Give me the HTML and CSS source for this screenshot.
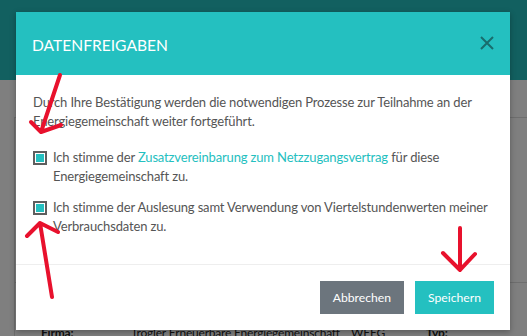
FILE: index.html
```html
<!DOCTYPE html>
<html lang="de">
<head>
    <meta charset="UTF-8">
    <meta name="viewport" content="width=device-width, initial-scale=1.0">
    <title>Datenfreigaben</title>
    <link rel="stylesheet" href="styles.css">
</head>
<body>
    <header class="navbar"></header>

    <main class="page">
        <div class="card">
            <div class="card-row"></div>
            <div class="card-row info-row">
                <span class="info-label">Firma:</span>
                <span class="info-value">Trogler Erneuerbare Energiegemeinschaft</span>
                <span class="info-short">WEEG</span>
                <span class="info-label">Typ:</span>
            </div>
        </div>
    </main>

    <div class="backdrop"></div>

    <div class="modal">
        <div class="modal-header">
            <h2 class="modal-title">Datenfreigaben</h2>
            <button class="close-btn" aria-label="Schließen">
                <svg width="14" height="14" viewBox="0 0 14 14">
                    <path d="M1 1 L13 13 M13 1 L1 13" stroke="currentColor" stroke-width="2" fill="none"/>
                </svg>
            </button>
        </div>
        <div class="modal-body">
            <p class="intro">Durch Ihre Bestätigung werden die notwendigen Prozesse zur Teilnahme an der Energiegemeinschaft weiter fortgeführt.</p>
            <label class="check-item">
                <span class="check-box"></span>
                <span>Ich stimme der <a href="#" class="link">Zusatzvereinbarung zum Netzzugangsvertrag</a> für diese Energiegemeinschaft zu.</span>
            </label>
            <label class="check-item">
                <span class="check-box"></span>
                <span>Ich stimme der Auslesung samt Verwendung von Viertelstundenwerten meiner Verbrauchsdaten zu.</span>
            </label>
        </div>
        <div class="modal-footer">
            <button class="btn btn-cancel">Abbrechen</button>
            <button class="btn btn-save">Speichern</button>
        </div>
    </div>

    <!-- annotation arrows drawn on the screenshot -->
    <svg class="arrows" width="527" height="336" viewBox="0 0 527 336">
        <g stroke="#e8112d" stroke-width="4" stroke-linecap="round" stroke-linejoin="round" fill="none">
            <path d="M60 75 L41 132 M31 122 L41 132 L61 125"/>
            <path d="M40 223 L52 297 M27 236 L40 223 L58 232"/>
            <path d="M460 228 L460 270 M443 253 L460 270 L475 254"/>
        </g>
    </svg>
</body>
</html>
```

FILE: styles.css
```css
body {
    margin: 0;
    width: 527px;
    height: 336px;
    overflow: hidden;
    font-family: Lato, "Open Sans", sans-serif;
    background-color: #fff;
    position: relative;
}
.navbar {
    height: 80px;
    background-color: #24c0c0;
}
.page {
    height: 256px;
    overflow: hidden;
    padding: 37px 0 0 14px;
    box-sizing: border-box;
}
.card {
    border-left: 1px solid #ddd;
    border-top: 1px solid #ddd;
}
.card-row {
    height: 164px;
    border-bottom: 1px solid #ddd;
}
.info-row {
    height: auto;
    border-bottom: none;
    display: flex;
    padding: 42px 0 0 26px;
    font-size: 12px;
    letter-spacing: -0.2px;
    color: #222;
    white-space: nowrap;
}
.info-label {
    font-weight: bold;
    width: 90px;
}
.info-value {
    width: 220px;
}
.info-short {
    width: 75px;
}
.backdrop {
    position: absolute;
    inset: 0;
    background-color: rgba(0, 0, 0, 0.5);
}
.modal {
    position: absolute;
    left: 16px;
    top: 12px;
    width: 494px;
    background-color: #fff;
    box-shadow: 0 2px 6px rgba(0, 0, 0, 0.3);
}
.modal-header {
    height: 63px;
    background-color: #24c0c0;
    display: flex;
    align-items: center;
    justify-content: space-between;
    padding: 0 16px 0 16px;
}
.modal-title {
    margin: 0;
    font-size: 15.6px;
    font-weight: normal;
    text-transform: uppercase;
    color: #fff;
    padding-top: 2px;
}
.close-btn {
    background: none;
    border: none;
    padding: 0;
    color: #196d6d;
    display: flex;
    margin-top: -2px;
}
.modal-body {
    padding: 18px 17px 28px 17px;
    font-size: 13px;
    letter-spacing: -0.15px;
    line-height: 19px;
    color: #555;
}
.intro {
    margin: 0 0 17px 0;
}
.check-item {
    display: flex;
    gap: 6px;
    margin-bottom: 12px;
}
.check-item:last-child {
    margin-bottom: 0;
}
.check-box {
    flex: none;
    width: 10px;
    height: 10px;
    margin-top: 3px;
    border: 2px solid #5e5e5e;
    background-color: #24c0c0;
    box-shadow: inset 0 0 0 1px #fff;
}
.link {
    color: #24c0c0;
    text-decoration: none;
}
.modal-footer {
    border-top: 1px solid #eee;
    display: flex;
    justify-content: flex-end;
    gap: 11px;
    padding: 16px 16px 16px 0;
}
.btn {
    height: 33px;
    border: none;
    font-family: Lato, "Open Sans", sans-serif;
    font-size: 12.2px;
    color: #fff;
    padding: 0 13px;
}
.btn-cancel {
    background-color: #6c757d;
}
.btn-save {
    background-color: #24c0c0;
}
.arrows {
    position: absolute;
    left: 0;
    top: 0;
    pointer-events: none;
}
```
